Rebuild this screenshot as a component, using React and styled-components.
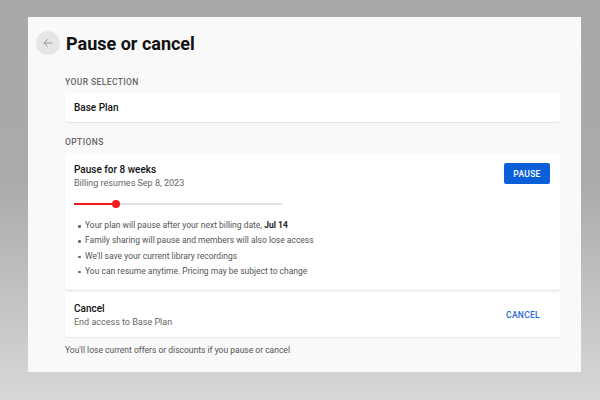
import React from "react";
import styled, { createGlobalStyle } from "styled-components";

const GlobalStyle = createGlobalStyle`
  html, body {
    margin: 0;
    padding: 0;
    width: 600px;
    height: 400px;
    overflow: hidden;
  }
  body {
    font-family: Roboto, "Liberation Sans", Arial, sans-serif;
  }
`;

const Backdrop = styled.div`
  width: 600px;
  height: 400px;
  box-sizing: border-box;
  padding: 17px 19px 28px 28px;
  background: linear-gradient(180deg, #a8a8a8 0%, #aaaaaa 45%, #d8d8d8 100%);
`;

const Panel = styled.div`
  height: 100%;
  box-sizing: border-box;
  background: #f9f9f9;
  padding: 14px 21px 0 8px;
`;

const Header = styled.div`
  display: flex;
  align-items: center;
  gap: 6px;
`;

const BackButton = styled.button`
  width: 24px;
  height: 24px;
  border-radius: 50%;
  border: none;
  padding: 0;
  background: #e6e6e6;
  display: flex;
  align-items: center;
  justify-content: center;
  color: #9a9a9a;
`;

const Title = styled.h1`
  margin: 0;
  font-size: 18px;
  font-weight: 700;
  color: #111;
`;

const Body = styled.div`
  margin-left: 29px;
`;

const SectionLabel = styled.div`
  font-size: 8.5px;
  font-weight: 500;
  letter-spacing: 0.4px;
  color: #666;
  margin: ${(p) => p.$top}px 0 0 0;
  height: 11px;
  line-height: 11px;
`;

const Card = styled.div`
  background: #fff;
  border-radius: 3px;
  box-shadow: 0 1px 1px rgba(0, 0, 0, 0.08);
`;

const SelectionCard = styled(Card)`
  margin-top: 5px;
  height: 29px;
  display: flex;
  align-items: center;
  padding: 0 9px;
  font-size: 10px;
  font-weight: 500;
  color: #111;
`;

const OptionsGroup = styled.div`
  margin-top: 5px;
  display: flex;
  flex-direction: column;
  gap: 3px;
`;

const OptionRow = styled.div`
  display: flex;
  justify-content: space-between;
  align-items: flex-start;
`;

const OptionCard = styled(Card)`
  padding: ${(p) => p.$pad};
`;

const OptionTitle = styled.div`
  font-size: 10px;
  font-weight: 500;
  color: #111;
  line-height: 13px;
`;

const OptionSub = styled.div`
  font-size: 9px;
  color: #666;
  line-height: 12px;
  margin-top: 1px;
`;

const PauseButton = styled.button`
  border: none;
  border-radius: 2px;
  background: #0b5fd8;
  color: #fff;
  font-family: inherit;
  font-size: 8.5px;
  font-weight: 500;
  letter-spacing: 0.3px;
  width: 46px;
  height: 21px;
  padding: 0;
`;

const TextButton = styled.button`
  border: none;
  background: none;
  color: #2a69d0;
  font-family: inherit;
  font-size: 8.5px;
  font-weight: 500;
  letter-spacing: 0.3px;
  padding: 0;
  margin-right: 10px;
`;

const Slider = styled.div`
  position: relative;
  width: 208px;
  height: 2px;
  background: #e2e2e2;
  margin: 14px 0 13px;
`;

const SliderFill = styled.div`
  height: 2px;
  background: #ee1c1c;
`;

const SliderThumb = styled.div`
  position: absolute;
  top: -3px;
  width: 8px;
  height: 8px;
  margin-left: -4px;
  border-radius: 50%;
  background: #ee1c1c;
`;

const Bullets = styled.ul`
  margin: 0;
  padding: 0 0 0 11px;
  list-style: none;
`;

const Bullet = styled.li`
  position: relative;
  font-size: 8.5px;
  color: #555;
  height: 15.3px;
  line-height: 15.3px;
  &::before {
    content: "";
    position: absolute;
    left: -7px;
    top: 7px;
    width: 2.5px;
    height: 2.5px;
    border-radius: 50%;
    background: #666;
  }
  b {
    color: #222;
    font-weight: 700;
  }
`;

const CancelRow = styled(OptionRow)`
  align-items: center;
`;

const Footnote = styled.div`
  margin-top: 8px;
  font-size: 8.5px;
  line-height: 10px;
  color: #555;
`;

const ArrowIcon = () => (
  <svg width="12" height="12" viewBox="0 0 12 12" fill="none" stroke="currentColor" strokeWidth="1" strokeLinecap="round" strokeLinejoin="round">
    <path d="M10 6H2M5.5 2.5L2 6l3.5 3.5" />
  </svg>
);

const percent = 20;

export default function App() {
  return (
    <>
      <GlobalStyle />
      <Backdrop>
        <Panel>
          <Header>
            <BackButton aria-label="Back">
              <ArrowIcon />
            </BackButton>
            <Title>Pause or cancel</Title>
          </Header>
          <Body>
            <SectionLabel $top={22}>YOUR SELECTION</SectionLabel>
            <SelectionCard>Base Plan</SelectionCard>
            <SectionLabel $top={15}>OPTIONS</SectionLabel>
            <OptionsGroup>
              <OptionCard $pad="10px 10px 11px 9px">
                <OptionRow>
                  <div>
                    <OptionTitle>Pause for 8 weeks</OptionTitle>
                    <OptionSub>Billing resumes Sep 8, 2023</OptionSub>
                  </div>
                  <PauseButton>PAUSE</PauseButton>
                </OptionRow>
                <Slider>
                  <SliderFill style={{ width: `${percent}%` }} />
                  <SliderThumb style={{ left: `${percent}%` }} />
                </Slider>
                <Bullets>
                  <Bullet>
                    Your plan will pause after your next billing date, <b>Jul 14</b>
                  </Bullet>
                  <Bullet>Family sharing will pause and members will also lose access</Bullet>
                  <Bullet>We'll save your current library recordings</Bullet>
                  <Bullet>You can resume anytime. Pricing may be subject to change</Bullet>
                </Bullets>
              </OptionCard>
              <OptionCard $pad="9px 10px 9px 9px">
                <CancelRow>
                  <div>
                    <OptionTitle>Cancel</OptionTitle>
                    <OptionSub>End access to Base Plan</OptionSub>
                  </div>
                  <TextButton>CANCEL</TextButton>
                </CancelRow>
              </OptionCard>
            </OptionsGroup>
            <Footnote>You'll lose current offers or discounts if you pause or cancel</Footnote>
          </Body>
        </Panel>
      </Backdrop>
    </>
  );
}
